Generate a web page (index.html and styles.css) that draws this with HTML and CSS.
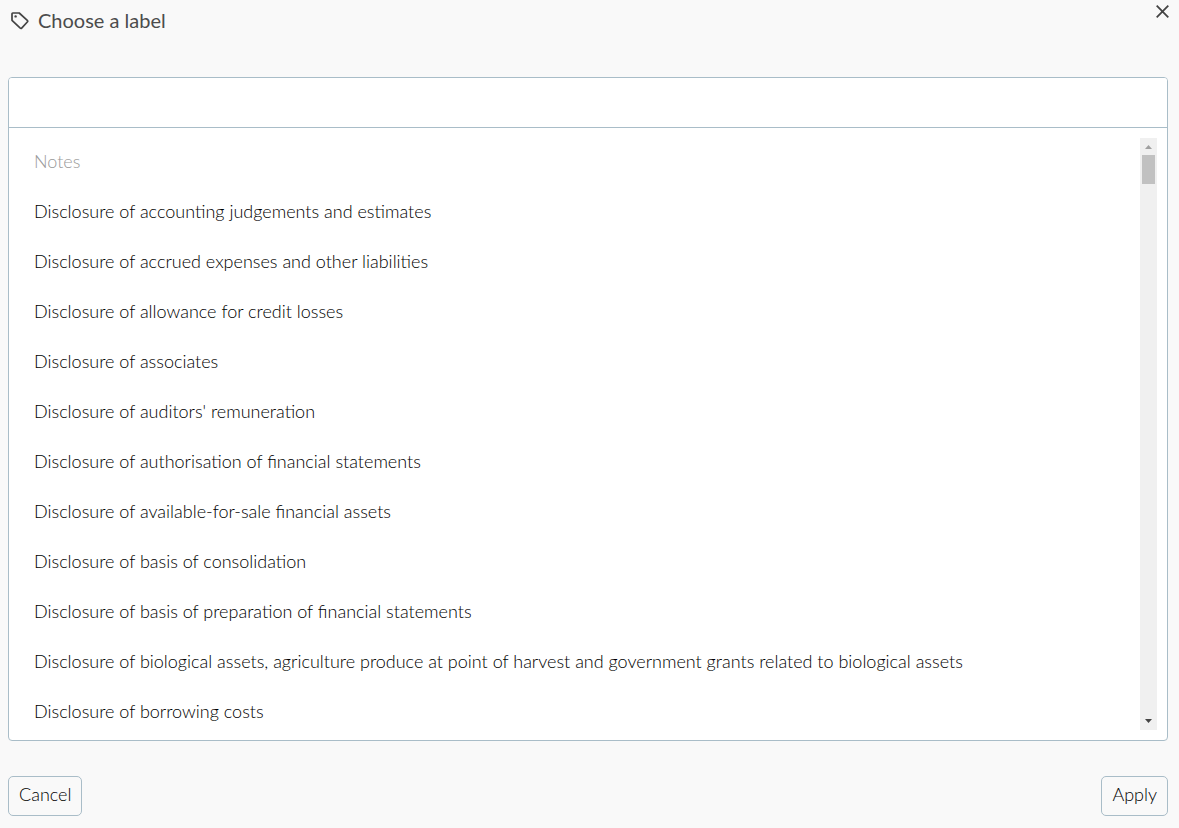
FILE: index.html
```html
<!DOCTYPE html>
<html lang="en">
<head>
<meta charset="utf-8">
<title>Choose a label</title>
<link rel="stylesheet" href="styles.css">
</head>
<body>
<main class="dialog">
  <header class="dialog-header">
    <svg class="tag-icon" viewBox="0 0 18 18" aria-hidden="true">
      <path d="M1.8 1H8.2L16.3 8.3Q17.2 9.1 16.3 10L10.9 15.8Q10 16.8 9 15.9L1 8.3V1.8Q1 1 1.8 1Z" fill="none" stroke="currentColor" stroke-width="1.7" stroke-linejoin="round"/>
      <circle cx="4.6" cy="4.4" r="1.2" fill="currentColor"/>
    </svg>
    <h1 class="dialog-title">Choose a label</h1>
    <button class="close" type="button" aria-label="Close">
      <svg class="close-icon" viewBox="0 0 13 13" aria-hidden="true"><path d="M.7.7 12.3 12.3M12.3.7.7 12.3" fill="none" stroke="currentColor" stroke-width="1.8"/></svg>
    </button>
  </header>
  <section class="picker">
    <input class="search" type="text" aria-label="Search labels">
    <div class="results">
      <ul class="list">
        <li class="item group">Notes</li>
        <li class="item">Disclosure of accounting judgements and estimates</li>
        <li class="item">Disclosure of accrued expenses and other liabilities</li>
        <li class="item">Disclosure of allowance for credit losses</li>
        <li class="item">Disclosure of associates</li>
        <li class="item">Disclosure of auditors' remuneration</li>
        <li class="item">Disclosure of authorisation of financial statements</li>
        <li class="item">Disclosure of available-for-sale financial assets</li>
        <li class="item">Disclosure of basis of consolidation</li>
        <li class="item">Disclosure of basis of preparation of financial statements</li>
        <li class="item">Disclosure of biological assets, agriculture produce at point of harvest and government grants related to biological assets</li>
        <li class="item">Disclosure of borrowing costs</li>
      </ul>
      <div class="scrollbar" aria-hidden="true">
        <svg class="arrow arrow-up" viewBox="0 0 17 17"><path d="M5 11 8.5 7 12 11Z" fill="currentColor"/></svg>
        <div class="thumb"></div>
        <svg class="arrow arrow-down" viewBox="0 0 17 17"><path d="M5 6H12L8.5 10Z" fill="currentColor"/></svg>
      </div>
    </div>
  </section>
  <footer class="actions">
    <button class="button" type="button">Cancel</button>
    <button class="button" type="button">Apply</button>
  </footer>
</main>
</body>
</html>
```
FILE: styles.css
```css
* {
  box-sizing: border-box;
}

body {
  margin: 0;
  background: #f9f9f9;
  color: #000;
  font-family: Lato, "Liberation Sans", sans-serif;
  font-size: 18px;
  font-weight: 300;
}

.dialog {
  display: flex;
  flex-direction: column;
  height: 100vh;
  padding: 5px 11px 12px 8px;
}

.dialog-header {
  display: flex;
  align-items: center;
  height: 32px;
  margin-bottom: 40px;
  padding-left: 3px;
  gap: 9px;
  color: #444;
}

.tag-icon {
  width: 18px;
  height: 18px;
}

.dialog-title {
  flex: 1;
  margin: 0;
  font-size: 20px;
  font-weight: 400;
  line-height: 30px;
  padding-bottom: 2px;
  color: #4c4c4c;
}

.close {
  display: flex;
  align-self: flex-start;
  margin-right: -1px;
  padding: 0;
  border: 0;
  background: none;
  color: #444;
}

.close-icon {
  width: 13px;
  height: 13px;
}

.picker {
  display: flex;
  flex: 1;
  flex-direction: column;
  min-height: 0;
  border: 1px solid #a9bdc8;
  border-radius: 4px;
  background: #fff;
  overflow: hidden;
}

.search {
  width: 100%;
  height: 50px;
  padding: 0 25px;
  border: 0;
  border-bottom: 1px solid #a9bdc8;
  background: #fff;
  color: inherit;
  font: inherit;
  outline: 0;
}

.results {
  display: flex;
  flex: 1;
  min-height: 0;
  padding: 10px;
}

.list {
  flex: 1;
  margin: 0;
  padding: 0;
  list-style: none;
  overflow: hidden;
}

.item {
  padding: 0 15px;
  line-height: 46px;
  margin-bottom: 4px;
}

.group {
  color: #999;
}

.scrollbar {
  display: flex;
  flex-direction: column;
  width: 17px;
  background: #f0f0f0;
}

.arrow {
  width: 17px;
  height: 17px;
}

.arrow-up {
  color: #a0a0a0;
}

.arrow-down {
  margin-top: auto;
  color: #444;
}

.thumb {
  height: 29px;
  margin: 0 2px;
  background: #c1c1c1;
}

.actions {
  display: flex;
  justify-content: space-between;
  margin-top: 35px;
}

.button {
  height: 40px;
  padding: 0 10px 4px;
  border: 1px solid #a9bdc8;
  border-radius: 5px;
  background: #f9f9f9;
  color: #000;
  font: inherit;
}
```
